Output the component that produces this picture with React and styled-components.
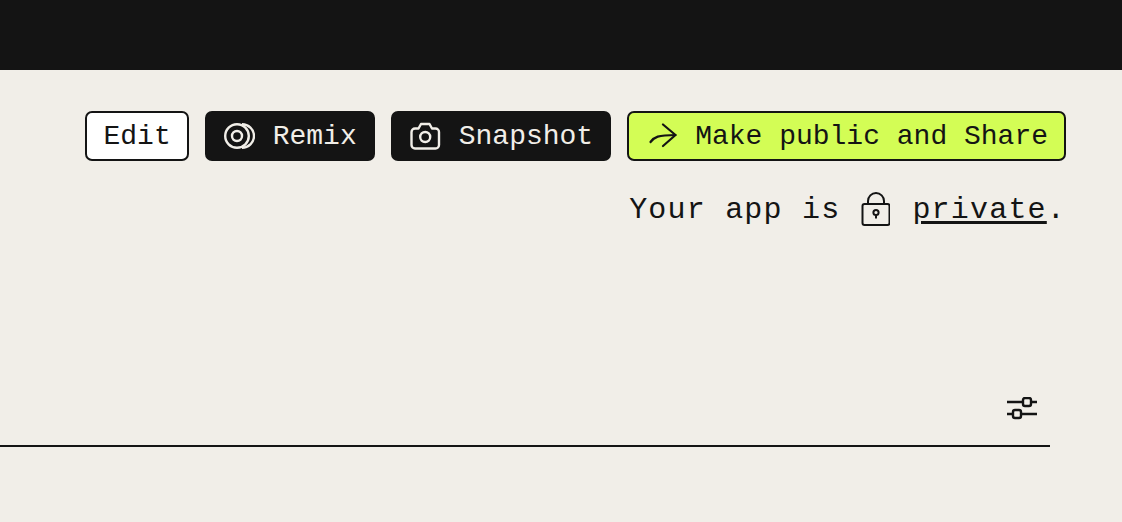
import React from "react";
import styled, { createGlobalStyle } from "styled-components";

const Global = createGlobalStyle`
  html, body { margin: 0; padding: 0; background: #f1eee8; overflow: hidden; }
  body { font-family: "Liberation Mono", "DejaVu Sans Mono", monospace; color: #141414; }
`;
const Page = styled.div`
  width: 1122px; height: 522px; display: flex; flex-direction: column;
`;
const TopBar = styled.header`height: 70px; background: #141414; flex: none;`;
const Main = styled.main`
  flex: 1; display: flex; flex-direction: column; align-items: flex-end;
  padding: 41px 56px 0 0;
`;
const Actions = styled.div`display: flex; gap: 16px;`;
const Button = styled.button`
  height: 50px; box-sizing: border-box; margin: 0; display: flex; align-items: center;
  gap: 18px; padding: 0 16px;
  border: 2px solid #141414; border-radius: 7px;
  background: ${p => p.$bg};
  color: ${p => p.$fg};
  font: 400 28px/1 "Liberation Mono", monospace;
`;
const Label = styled.span`position: relative; top: 1px;`;
const Notice = styled.p`
  margin: 23px 0 0; height: 50px; display: flex; align-items: center;
  font-size: 30px; letter-spacing: 1.2px; white-space: pre; line-height: 50px;
`;
const NoticeText = styled.span`position: relative; top: 1px;`;
const PrivateLink = styled.a`
  position: relative; top: 1px;
  text-decoration: underline; text-decoration-thickness: 3px; text-underline-offset: 3px;
  color: inherit;
`;
const LockIcon = styled.svg`margin: 0 22px 0 21px; flex: none;`;
const ChartFooter = styled.div`
  width: 1050px; margin-right: 16px; margin-top: 162px;
  height: 51px; box-sizing: border-box; border-bottom: 2px solid #141414;
  display: flex; justify-content: flex-end; align-items: flex-start;
  padding: 1px 12px 0 0;
`;
const SettingsIcon = styled.svg`display: block; flex: none;`;

export default function App() {
  return (
    <Page>
      <Global />
      <TopBar />
      <Main>
        <Actions>
          <Button $bg="#fff" $fg="#141414"><Label>Edit</Label></Button>
          <Button $bg="#141414" $fg="#f1eee8">
            <svg width="32" height="28" viewBox="0 0 32 28" fill="none" stroke="currentColor" strokeWidth="2.4">
              <circle cx="14" cy="14" r="11.8" />
              <circle cx="14" cy="14" r="5" />
              <path d="M19 2.300C25.500 2.300 31 7.500 31 14S25.500 25.700 19 25.700" />
            </svg>
            <Label>Remix</Label>
          </Button>
          <Button $bg="#141414" $fg="#f1eee8">
            <svg width="32" height="28" viewBox="0 0 32 28" fill="none" stroke="currentColor" strokeWidth="2.4" strokeLinejoin="round">
              <path d="M2.500 10a3.500 3.500 0 0 1 3.500-3.500H9.500L12 2h8.500L23 6.500h3.500A3.500 3.500 0 0 1 30 10v13a3.500 3.500 0 0 1-3.500 3.500H6A3.500 3.500 0 0 1 2.500 23z" />
              <circle cx="16.200" cy="15" r="5" />
            </svg>
            <Label>Snapshot</Label>
          </Button>
          <Button $bg="#d3fd55" $fg="#141414">
            <svg width="32" height="28" viewBox="0 0 32 28" fill="none" stroke="currentColor" strokeWidth="2.2" strokeLinecap="round" strokeLinejoin="round">
              <path d="M5.500 20C9 15 13 13 30.500 13" />
              <path d="M18 2.500 30.500 13 18 24" />
            </svg>
            <Label>Make public and Share</Label>
          </Button>
        </Actions>
        <Notice>
          <NoticeText>Your app is</NoticeText>
          <LockIcon width="29" height="34" viewBox="0 0 29 34" fill="none" stroke="currentColor" strokeWidth="2">
            <rect x="1.500" y="12" width="27" height="21" rx="2" />
            <path d="M7 12V9a8 8 0 0 1 16 0v3" />
            <circle cx="15" cy="20.500" r="2.600" />
            <path d="M15 23V26.500" />
          </LockIcon>
          <PrivateLink href="#">private</PrivateLink>
          <NoticeText>.</NoticeText>
        </Notice>
        <ChartFooter>
          <SettingsIcon width="32" height="23" viewBox="0 0 32 23" fill="none" stroke="currentColor" strokeWidth="2.400">
            <path d="M1 5H17M25 5H31M1 17H7M15 17H31" />
            <rect x="17" y="1" width="8" height="8" rx="2" />
            <rect x="7" y="13" width="8" height="8" rx="2" />
          </SettingsIcon>
        </ChartFooter>
      </Main>
    </Page>
  );
}
